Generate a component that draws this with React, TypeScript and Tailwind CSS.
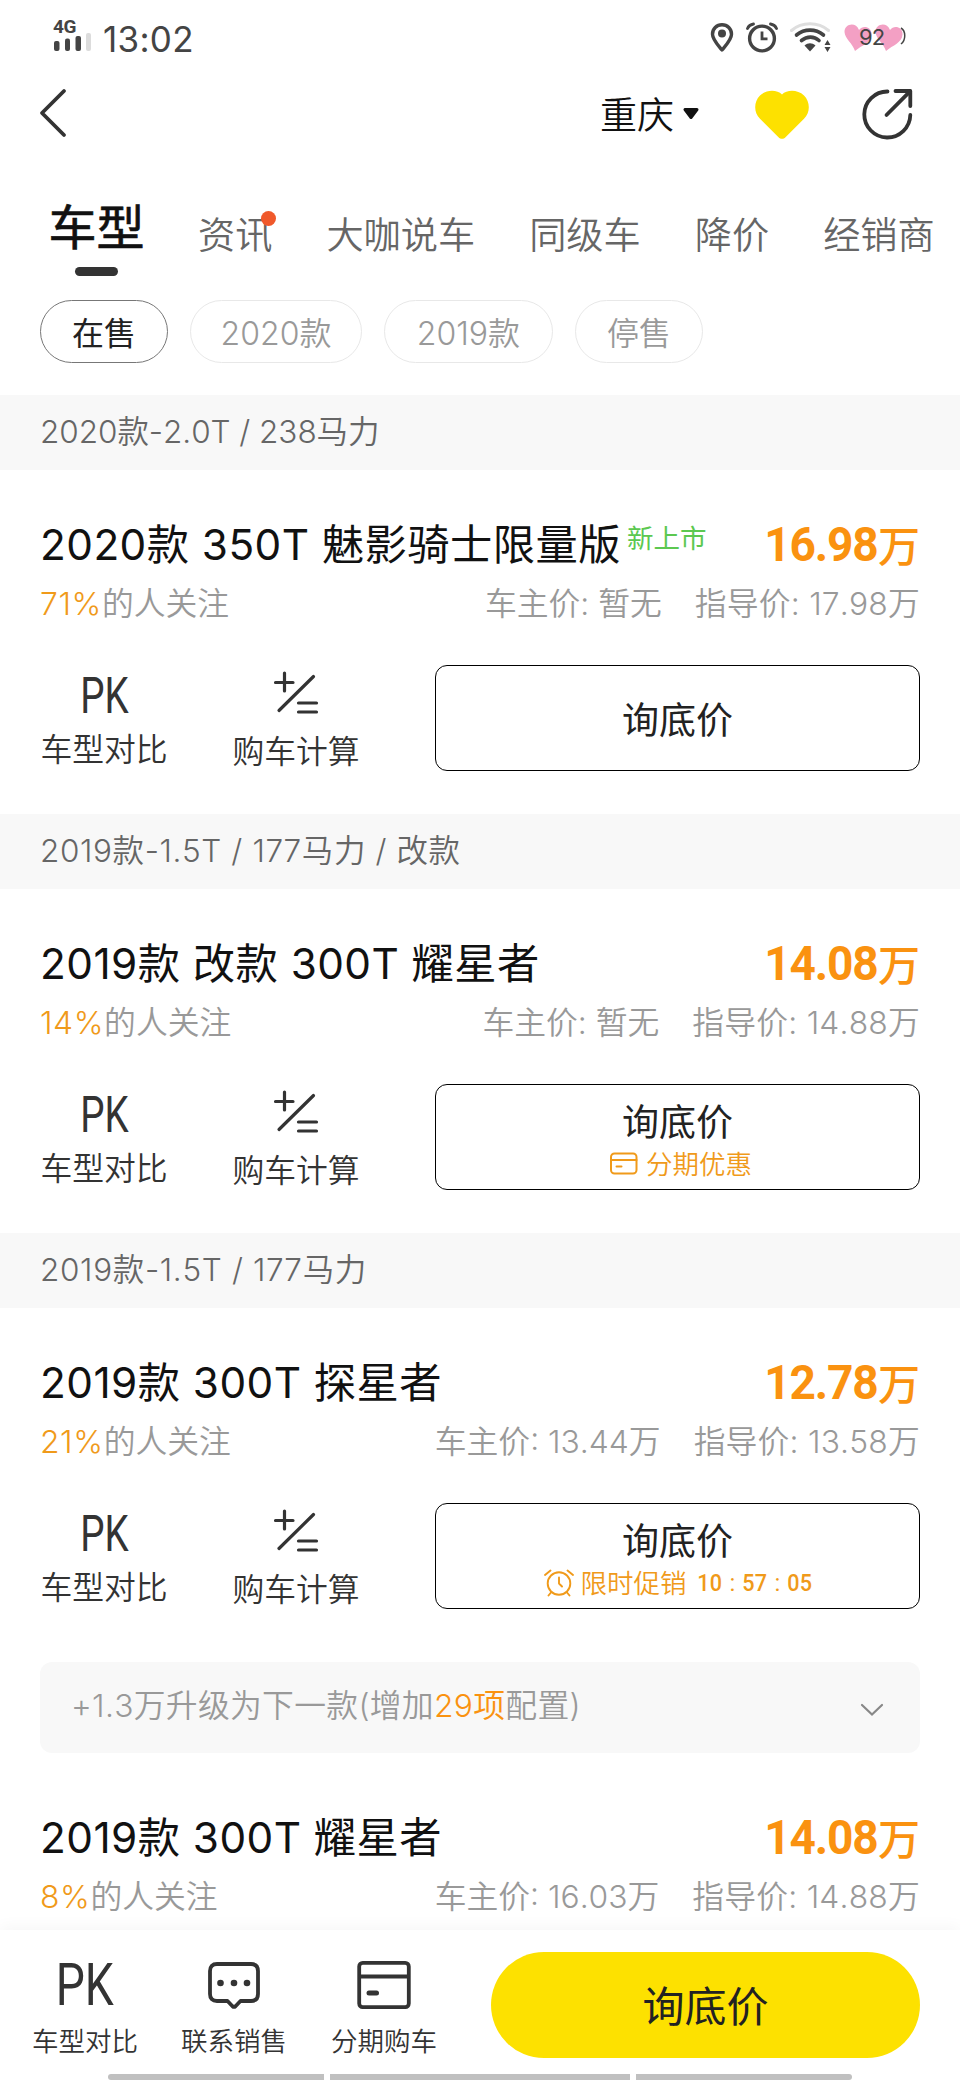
import { clsx } from "clsx";

type Promo = "installment" | "countdown";

interface Car {
  name: string;
  price: string;
  percent: string;
  ownerPrice: string;
  guidePrice: string;
  isNew?: boolean;
  promo?: Promo;
}

const tabs = ["资讯", "大咖说车", "同级车", "降价", "经销商"];
const filters = ["在售", "2020款", "2019款", "停售"];

const groups: { title: string; tracking: string; car: Car }[] = [
  {
    title: "2020款-2.0T / 238马力",
    tracking: "tracking-[-0.05px]",
    car: { name: "2020款 350T 魅影骑士限量版", price: "16.98", percent: "71%", ownerPrice: "暂无", guidePrice: "17.98万", isNew: true },
  },
  {
    title: "2019款-1.5T / 177马力 / 改款",
    tracking: "tracking-[0.6px]",
    car: { name: "2019款 改款 300T 耀星者", price: "14.08", percent: "14%", ownerPrice: "暂无", guidePrice: "14.88万", promo: "installment" },
  },
  {
    title: "2019款-1.5T / 177马力",
    tracking: "tracking-[0.65px]",
    car: { name: "2019款 300T 探星者", price: "12.78", percent: "21%", ownerPrice: "13.44万", guidePrice: "13.58万", promo: "countdown" },
  },
];

const lastCar: Car = {
  name: "2019款 300T 耀星者",
  price: "14.08",
  percent: "8%",
  ownerPrice: "16.03万",
  guidePrice: "14.88万",
};

const StatusBar = () => (
  <div className="flex h-[63px] shrink-0 items-start justify-between pl-[53px] pr-[53px] text-[#444]">
    <div className="flex">
      <div className="w-[40px] pt-[17px]">
        <div className="h-[16px] font-['Roboto'] text-[19px] font-bold leading-[19px] tracking-[-0.5px]">4G</div>
        <svg width="38" height="18" viewBox="0 0 38 18" fill="#444">
          <rect x="1" y="8" width="5.5" height="10" rx="2" />
          <rect x="12" y="5.500" width="5" height="12.500" rx="2" />
          <rect x="22.500" y="3" width="5.500" height="15" rx="2" />
          <rect x="33" y="0" width="5" height="18" rx="2" fill="#dcdcdc" />
        </svg>
      </div>
      <div className="ml-[10px] pt-[18px] text-[35px] font-normal leading-[42px] tracking-[0.3px]">13:02</div>
    </div>
    <div className="flex pt-[22px]">
      <svg width="24" height="31" viewBox="0 0 24 31">
        <path d="M12 2.800C6.500 2.800 2.500 7 2.500 12.200C2.500 17.500 7.500 22.500 12 28C16.500 22.500 21.500 17.500 21.500 12.200C21.500 7 17.500 2.800 12 2.800Z" fill="none" stroke="#444" strokeWidth="3.400" strokeLinejoin="round" />
        <circle cx="12" cy="11.500" r="4" fill="#444" />
      </svg>
      <svg className="ml-[12px]" width="32" height="31" viewBox="0 0 32 31" fill="none" stroke="#444" strokeLinecap="round">
        <circle cx="16" cy="16.500" r="12.400" strokeWidth="3.400" />
        <path d="M16 9.500V16.800H21.500" strokeWidth="2.800" strokeLinecap="butt" />
        <path d="M1.500 6.500C2.500 4 4.500 2.500 7.500 2M24.500 2C27.500 2.500 29.500 4 30.500 6.500" strokeWidth="2.800" />
      </svg>
      <svg className="ml-[12px]" width="42" height="31" viewBox="0 0 42 31" fill="none">
        <path d="M1.500 8.500C12 -0.500 28 -0.500 38.500 8.500" stroke="#dedede" strokeWidth="3" strokeLinecap="round" />
        <path d="M6.500 13C14.500 6.500 25.500 6.500 33.500 13" stroke="#444" strokeWidth="3.600" strokeLinecap="round" />
        <path d="M11.500 18.500C17 14 24 14 29 18.500" stroke="#444" strokeWidth="3.600" strokeLinecap="round" />
        <path d="M14.500 23.500C18 20.500 22 20.500 25.500 23.500L20 29.500Z" fill="#444" />
        <path d="M34.500 23L37.500 18L40.500 23ZM34.500 25L37.500 30L40.500 25Z" fill="#444" />
      </svg>
      <div className="relative ml-[11px] h-[31px] w-[64px]">
        <svg width="64" height="31" viewBox="0 0 64 31">
          <path d="M58 6C63 9 63 18 58 22" fill="none" stroke="#444" strokeWidth="1.500" />
          <path d="M12 29C9.500 21 2 17 1.500 10C1.500 1.500 13 -0.500 16 8C20 2.500 29 5 28.500 12.500C28 21 19 23 12 29Z" fill="#f3a0c4" />
          <path d="M43 29C40.500 21 33 17 32.500 10C32.500 1.500 44 -0.500 47 8C51 2.500 60 5 59.500 12.500C59 21 50 23 43 29Z" fill="#f3a0c4" />
        </svg>
        <span className="absolute left-[16px] top-[3px] text-[22px] leading-[24px] tracking-[-0.8px] text-[#444]">92</span>
      </div>
    </div>
  </div>
);

const Header = () => (
  <div className="flex h-[100px] shrink-0 items-center pl-[39px] pr-[47px]">
    <svg width="28" height="50" viewBox="0 0 28 50" fill="none" stroke="#333" strokeWidth="3.800" strokeLinecap="round" strokeLinejoin="round">
      <path d="M25 3L3 25L25 47" />
    </svg>
    <div className="ml-auto flex items-center">
      <span className="mt-[5px] text-[37px] font-[350] leading-[50px] text-[#111]">重庆</span>
      <svg className="ml-[8px] mt-[2px]" width="18" height="14" viewBox="0 0 18 14">
        <path d="M3 2.500H15L9 10.500Z" fill="#111" stroke="#111" strokeWidth="3" strokeLinejoin="round" />
      </svg>
    </div>
    <svg className="ml-[55px] mt-[3px]" width="54" height="50" viewBox="0 0 54 50">
      <path d="M27 4.500C22 -0.500 11.500 -0.700 5 5.500C-1.500 12 -1.300 22.500 5 28.800L23.500 47.200C25.500 49.400 28.500 49.400 30.500 47.200L49 28.800C55.300 22.500 55.500 12 49 5.500C42.500 -0.700 32 -0.500 27 4.500Z" fill="#fde100" />
    </svg>
    <svg className="ml-[52px] mt-px" width="52" height="52" viewBox="0 0 52 52" fill="none" stroke="#333" strokeWidth="3.800" strokeLinecap="round" strokeLinejoin="round">
      <path d="M26.500 3.500A23 23 0 1 0 49.300 27" />
      <path d="M34.500 3H49.300V18" />
      <path d="M49 3.300L25.500 27" />
    </svg>
  </div>
);

const Tabs = () => (
  <div className="flex h-[137px] shrink-0 gap-[54px] whitespace-nowrap pl-[49px]">
    <div className="flex w-[95px] flex-col items-center pt-[29px]">
      <span className="text-[48px] font-normal leading-[72px] text-[#111] [-webkit-text-stroke:0.7px_#111]">车型</span>
      <div className="mt-[3px] h-[9px] w-[43px] rounded-full bg-[#333]" />
    </div>
    {tabs.map((tab, index) => (
      <div key={tab} className="relative h-fit pt-[45px] text-[37.200px] font-[350] leading-[56px] text-[#666]">
        {tab}
        {index === 0 && <span className="absolute right-[-4px] top-[48px] h-[15px] w-[15px] rounded-full bg-[#f0592b]" />}
      </div>
    ))}
  </div>
);

const Filters = () => (
  <div className="flex shrink-0 gap-[22px] px-10">
    {filters.map((filter, index) => (
      <div
        key={filter}
        className={clsx(
          "flex h-[63px] items-center justify-center rounded-full border pt-[4px] text-[32px] leading-[40px]",
          index === 0 ? "border-[#777] font-normal text-[#222]" : "border-[#e8e8e8] font-[350] text-[#999]",
          index === 1 && "w-[172px]",
          index === 2 && "w-[169px]",
          (index === 0 || index === 3) && "w-[128px]"
        )}
      >
        {filter}
      </div>
    ))}
  </div>
);

const PkIcon = ({ large }: { large?: boolean }) => (
  <div className={clsx("flex items-center justify-center", large ? "h-[48px]" : "h-[40px]")}>
    <span
      className={clsx(
        "inline-block scale-x-[0.77] font-['Roboto'] font-normal text-[#333]",
        large ? "text-[60px] leading-[48px]" : "text-[50px] leading-[40px]"
      )}
    >
      PK
    </span>
  </div>
);

const CalcIcon = () => (
  <svg className="shrink-0" width="46" height="44" viewBox="0 0 46 44" fill="none" stroke="#333" strokeWidth="3.200" strokeLinecap="round">
    <path d="M2.500 12.500H20M11.500 3V21M40.500 6.500L6 40.500M25.500 33H43.500M25.500 42H43.500" />
  </svg>
);

const CardIcon = () => (
  <svg width="28" height="23" viewBox="0 0 28 23" fill="none" stroke="#f09a1a" strokeWidth="2" strokeLinecap="round">
    <rect x="1" y="1.500" width="25.500" height="20" rx="3.500" />
    <path d="M1 8H26.500M6.500 14.500H11.500" />
  </svg>
);

const ClockIcon = () => (
  <svg width="30" height="28" viewBox="0 0 30 28" fill="none" stroke="#f09a1a" strokeWidth="1.900" strokeLinecap="round" strokeLinejoin="round">
    <circle cx="15" cy="14.500" r="11.300" />
    <path d="M15 8.500V14.500L18 17.500M1 6L6.500 1.500M29 6L23.500 1.500M7 23.500L4.500 26.500M23 23.500L25.500 26.500" />
  </svg>
);

const Countdown = ({ parts }: { parts: string[] }) => (
  <span className="ml-[12px] flex font-['Roboto'] text-[24px] font-medium">
    {parts.map((part, index) => (
      <span key={part} className="flex">
        {index > 0 && <span className="w-[22px] text-center font-normal">:</span>}
        <span className="flex w-[23px] justify-center">
          <span className="scale-x-[0.9]">{part}</span>
        </span>
      </span>
    ))}
  </span>
);

const CarHeading = ({ car }: { car: Car }) => (
  <div className="px-10 pt-[45px]">
    <div className="flex h-[60px] items-center whitespace-nowrap">
      <h2 className="text-[42.300px] font-normal leading-[60px] tracking-[0.45px] text-[#111]">{car.name}</h2>
      {car.isNew && <span className="mb-[15px] ml-[6px] text-[26.500px] leading-[32px] text-[#5cc850]">新上市</span>}
      <div className="ml-auto flex items-center text-[#fa9210]">
        <span className="inline-block origin-right scale-x-[0.94] font-['Roboto'] text-[49px] font-bold leading-[60px] tracking-[-1.200px]">
          {car.price}
        </span>
        <span className="mt-[3px] text-[42px] font-medium leading-[60px]">万</span>
      </div>
    </div>
    <div className="flex h-[58px] items-center justify-between whitespace-nowrap text-[31.800px] font-[350] leading-[44px] text-[#999]">
      <span>
        <span className="tracking-[0.6px] text-[#f09a1a]">{car.percent}</span>的人关注
      </span>
      <span className="flex gap-[33px]">
        <span>车主价: {car.ownerPrice}</span>
        <span className="tracking-[0.2px]">指导价: {car.guidePrice}</span>
      </span>
    </div>
  </div>
);

const CarActions = ({ promo }: { promo?: Promo }) => (
  <div className="mt-[32px] flex h-[106px] px-10">
    <div className="w-[128px] pt-[11px] text-center">
      <PkIcon />
      <div className="mt-[12px] text-[31.800px] font-[350] leading-[44px] text-[#333]">车型对比</div>
    </div>
    <div className="ml-[64px] flex w-[128px] flex-col items-center whitespace-nowrap pt-[5px]">
      <CalcIcon />
      <div className="mt-[16px] text-[31.800px] font-[350] leading-[44px] text-[#333]">购车计算</div>
    </div>
    <button className="ml-auto flex w-[485px] flex-col items-center justify-center rounded-[12px] border border-black pt-[5px]">
      <span className="text-[37px] leading-[48px] text-[#222]">询底价</span>
      {promo === "installment" && (
        <span className="flex h-[33px] items-center gap-[8px] pl-[7px] text-[26.500px] font-[350] leading-[34px] text-[#f09a1a]">
          <CardIcon />
          分期优惠
        </span>
      )}
      {promo === "countdown" && (
        <span className="flex h-[33px] items-center text-[26.500px] font-[350] leading-[34px] text-[#f09a1a]">
          <ClockIcon />
          <span className="ml-[7px]">限时促销</span>
          <Countdown parts={["10", "57", "05"]} />
        </span>
      )}
    </button>
  </div>
);

const UpgradeBar = () => (
  <div className="mx-10 mt-[10px] flex h-[91px] items-center justify-between rounded-[12px] bg-[#f8f8f8] pl-[31px] pr-[36px]">
    <span className="mb-[3px] text-[31.800px] font-[350] leading-[44px] tracking-[0.3px] text-[#999]">
      +1.3万升级为下一款(增加<span className="text-[#fa9210]">29项</span>配置)
    </span>
    <svg className="mt-[4px]" width="24" height="14" viewBox="0 0 24 14" fill="none" stroke="#888" strokeWidth="2.200" strokeLinecap="round">
      <path d="M2 2L12 11.500L22 2" />
    </svg>
  </div>
);

const BottomBar = () => (
  <div className="relative h-[150px] shrink-0 bg-white shadow-[0_-4px_14px_rgba(0,0,0,0.035)]">
    <div className="flex pl-[32px] pr-10 text-[26.500px] font-[350] leading-[36px] text-[#333]">
      <div className="w-[106px] pt-[31px] text-center">
        <PkIcon large />
        <div className="mt-[14px]">车型对比</div>
      </div>
      <div className="ml-[43px] flex w-[106px] flex-col items-center pt-[31px]">
        <svg width="54" height="48" viewBox="0 0 54 48" fill="none" stroke="#333" strokeWidth="3.800" strokeLinejoin="round">
          <path d="M10 3H44Q51 3 51 10V33Q51 40 44 40H33.500L28.500 45.200Q27 46.500 25.500 45.200L20.500 40H10Q3 40 3 33V10Q3 3 10 3Z" />
          <g fill="#333" stroke="none">
            <circle cx="13.500" cy="22" r="3.300" />
            <circle cx="27" cy="22" r="3.300" />
            <circle cx="40" cy="22" r="3.300" />
          </g>
        </svg>
        <div className="mt-[14px]">联系销售</div>
      </div>
      <div className="ml-[44px] flex w-[106px] flex-col items-center pt-[31px]">
        <svg width="54" height="48" viewBox="0 0 54 48" fill="none" stroke="#333" strokeWidth="3.800" strokeLinecap="round">
          <rect x="2.200" y="1.900" width="49.600" height="44.200" rx="3.500" />
          <path d="M3 15.500H51" />
          <path d="M12 32H19.500" strokeWidth="5" />
        </svg>
        <div className="mt-[14px]">分期购车</div>
      </div>
      <button className="ml-auto mt-[22px] h-[106px] w-[429px] rounded-full bg-[#fde100] pt-[4px] text-[42px] font-normal leading-[102px] text-[#222]">
        询底价
      </button>
    </div>
    {/* system gesture handles */}
    <div className="absolute bottom-0 left-[108px] flex h-[6px] gap-[6px]">
      <div className="w-[216px] rounded-l-full bg-[#c0c0c0]" />
      <div className="w-[300px] bg-[#c0c0c0]" />
      <div className="w-[216px] rounded-r-full bg-[#c0c0c0]" />
    </div>
  </div>
);

const App = () => {
  return (
    <div className="flex h-[2080px] w-[960px] flex-col overflow-hidden bg-white font-['Inter','Noto_Sans_CJK_SC',sans-serif] [font-kerning:none]">
      <StatusBar />
      <Header />
      <Tabs />
      <Filters />
      <div className="mt-[32px] min-h-0 flex-1 overflow-hidden">
        {groups.map(({ title, tracking, car }) => (
          <section key={title} className="h-[419px]">
            <div className={clsx("h-[75px] bg-[#f8f8f8] px-10 text-[31.500px] font-[350] leading-[73px] text-[#666]", tracking)}>{title}</div>
            <CarHeading car={car} />
            <CarActions promo={car.promo} />
          </section>
        ))}
        <UpgradeBar />
        <div className="pt-[10px]">
          <CarHeading car={lastCar} />
        </div>
      </div>
      <BottomBar />
    </div>
  );
};

export default App;
